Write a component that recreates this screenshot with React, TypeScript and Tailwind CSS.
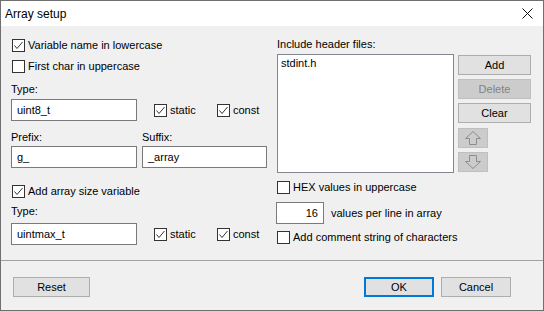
import React from "react";

function Check({ checked }: { checked?: boolean }) {
  return (
    <span className="w-[13px] h-[13px] shrink-0 border border-[#333333] bg-white flex items-center justify-center">
      {checked && (
        <svg width="11" height="11" viewBox="0 0 11 11">
          <path d="M1.5 5.5 L4 8.5 L9.5 2" stroke="#333333" strokeWidth="1" fill="none" />
        </svg>
      )}
    </span>
  );
}

function CheckRow({ label, checked, className = "" }: { label: string; checked?: boolean; className?: string }) {
  return (
    <div className={"flex items-center h-[13px] " + className}>
      <Check checked={checked} />
      <span className="ml-[3px] whitespace-nowrap leading-[13px]">{label}</span>
    </div>
  );
}

function Field({ value, className = "" }: { value: string; className?: string }) {
  return (
    <div className={"h-[22px] border border-[#7a7a7a] bg-white flex items-center pl-[5px] " + className}>
      {value}
    </div>
  );
}

function Btn({ label, className = "", disabled, focused }: { label: string; className?: string; disabled?: boolean; focused?: boolean }) {
  return (
    <div
      className={
        "h-[20px] flex items-center justify-center " +
        (disabled
          ? "bg-[#cccccc] border border-[#bfbfbf] text-[#838383] "
          : focused
          ? "bg-[#e1e1e1] border-2 border-[#0078d7] "
          : "bg-[#e1e1e1] border border-[#adadad] ") +
        className
      }
    >
      {label}
    </div>
  );
}

function Arrow({ down }: { down?: boolean }) {
  return (
    <div className="w-[30px] h-[20px] bg-[#cccccc] border border-[#bfbfbf] flex items-center justify-center">
      <svg width="16" height="14" viewBox="0 0 16 14" className={down ? "rotate-180" : ""}>
        <path d="M8 0.5 L15.5 7.5 L11.5 7.5 L11.5 13.5 L4.5 13.5 L4.5 7.5 L0.5 7.5 Z" fill="none" stroke="#8c8c8c" strokeWidth="1" />
      </svg>
    </div>
  );
}

export default function App() {
  return (
    <div className="w-[544px] h-[311px] border border-[#6f6f6f] bg-[#f0f0f0] flex flex-col font-['Liberation_Sans',sans-serif] text-[11px] text-black overflow-hidden">
      <div className="h-[25px] bg-white flex items-center justify-between shrink-0">
        <span className="pl-[4px] pt-[1px] text-[12px]">Array setup</span>
        <div className="w-[32px] h-[25px] flex items-center justify-center">
          <svg width="11" height="11" viewBox="0 0 11 11">
            <path d="M0.5 0.5 L10.5 10.5 M10.5 0.5 L0.5 10.5" stroke="#111" strokeWidth="1" />
          </svg>
        </div>
      </div>

      <div className="h-[234px] flex shrink-0">
        <div className="w-[256px] ml-[10px] flex flex-col">
          <CheckRow label="Variable name in lowercase" checked className="mt-[13px] ml-[1px]" />
          <CheckRow label="First char in uppercase" className="mt-[8px] ml-[1px]" />
          <div className="mt-[9px] h-[15px] leading-[15px]">Type:</div>
          <div className="mt-[2px] flex items-center">
            <Field value="uint8_t" className="w-[126px]" />
            <CheckRow label="static" checked className="ml-[17px] w-[63px]" />
            <CheckRow label="const" checked />
          </div>
          <div className="mt-[9px] flex">
            <div className="w-[131px] h-[15px] leading-[15px]">Prefix:</div>
            <div className="h-[15px] leading-[15px]">Suffix:</div>
          </div>
          <div className="mt-[1px] flex gap-[5px]">
            <Field value="g_" className="w-[126px]" />
            <Field value="_array" className="w-[125px]" />
          </div>
          <CheckRow label="Add array size variable" checked className="mt-[17px] ml-[1px]" />
          <div className="mt-[6px] h-[15px] leading-[15px]">Type:</div>
          <div className="mt-[4px] flex items-center">
            <Field value="uintmax_t" className="w-[126px]" />
            <CheckRow label="static" checked className="ml-[17px] w-[63px]" />
            <CheckRow label="const" checked />
          </div>
        </div>

        <div className="ml-[10px] flex flex-col">
          <div className="mt-[11px] h-[15px] leading-[15px]">Include header files:</div>
          <div className="mt-[2px] flex gap-[4px]">
            <div className="w-[177px] h-[119px] border border-[#828790] bg-white pl-[3px] pt-[1px] leading-[15px]">stdint.h</div>
            <div className="mt-[1px] flex flex-col">
              <Btn label="Add" className="w-[73px]" />
              <Btn label="Delete" disabled className="w-[73px] mt-[4px]" />
              <Btn label="Clear" className="w-[73px] mt-[4px]" />
              <div className="mt-[5px]"><Arrow /></div>
              <div className="mt-[4px]"><Arrow down /></div>
            </div>
          </div>
          <CheckRow label="HEX values in uppercase" className="mt-[8px]" />
          <div className="mt-[8px] flex items-center ml-[-1px]">
            <div className="w-[48px] h-[22px] border border-[#7a7a7a] bg-white flex items-center justify-end pr-[5px]">16</div>
            <span className="ml-[7px]">values per line in array</span>
          </div>
          <CheckRow label="Add comment string of characters" className="mt-[7px]" />
        </div>
      </div>

      <div className="h-px bg-[#a0a0a0] shrink-0" />

      <div className="flex-1 flex items-start pt-[16px] pl-[12px] pr-[32px]">
        <Btn label="Reset" className="w-[77px]" />
        <div className="flex-1" />
        <Btn label="OK" focused className="w-[70px]" />
        <Btn label="Cancel" className="w-[70px] ml-[7px]" />
      </div>
    </div>
  );
}
